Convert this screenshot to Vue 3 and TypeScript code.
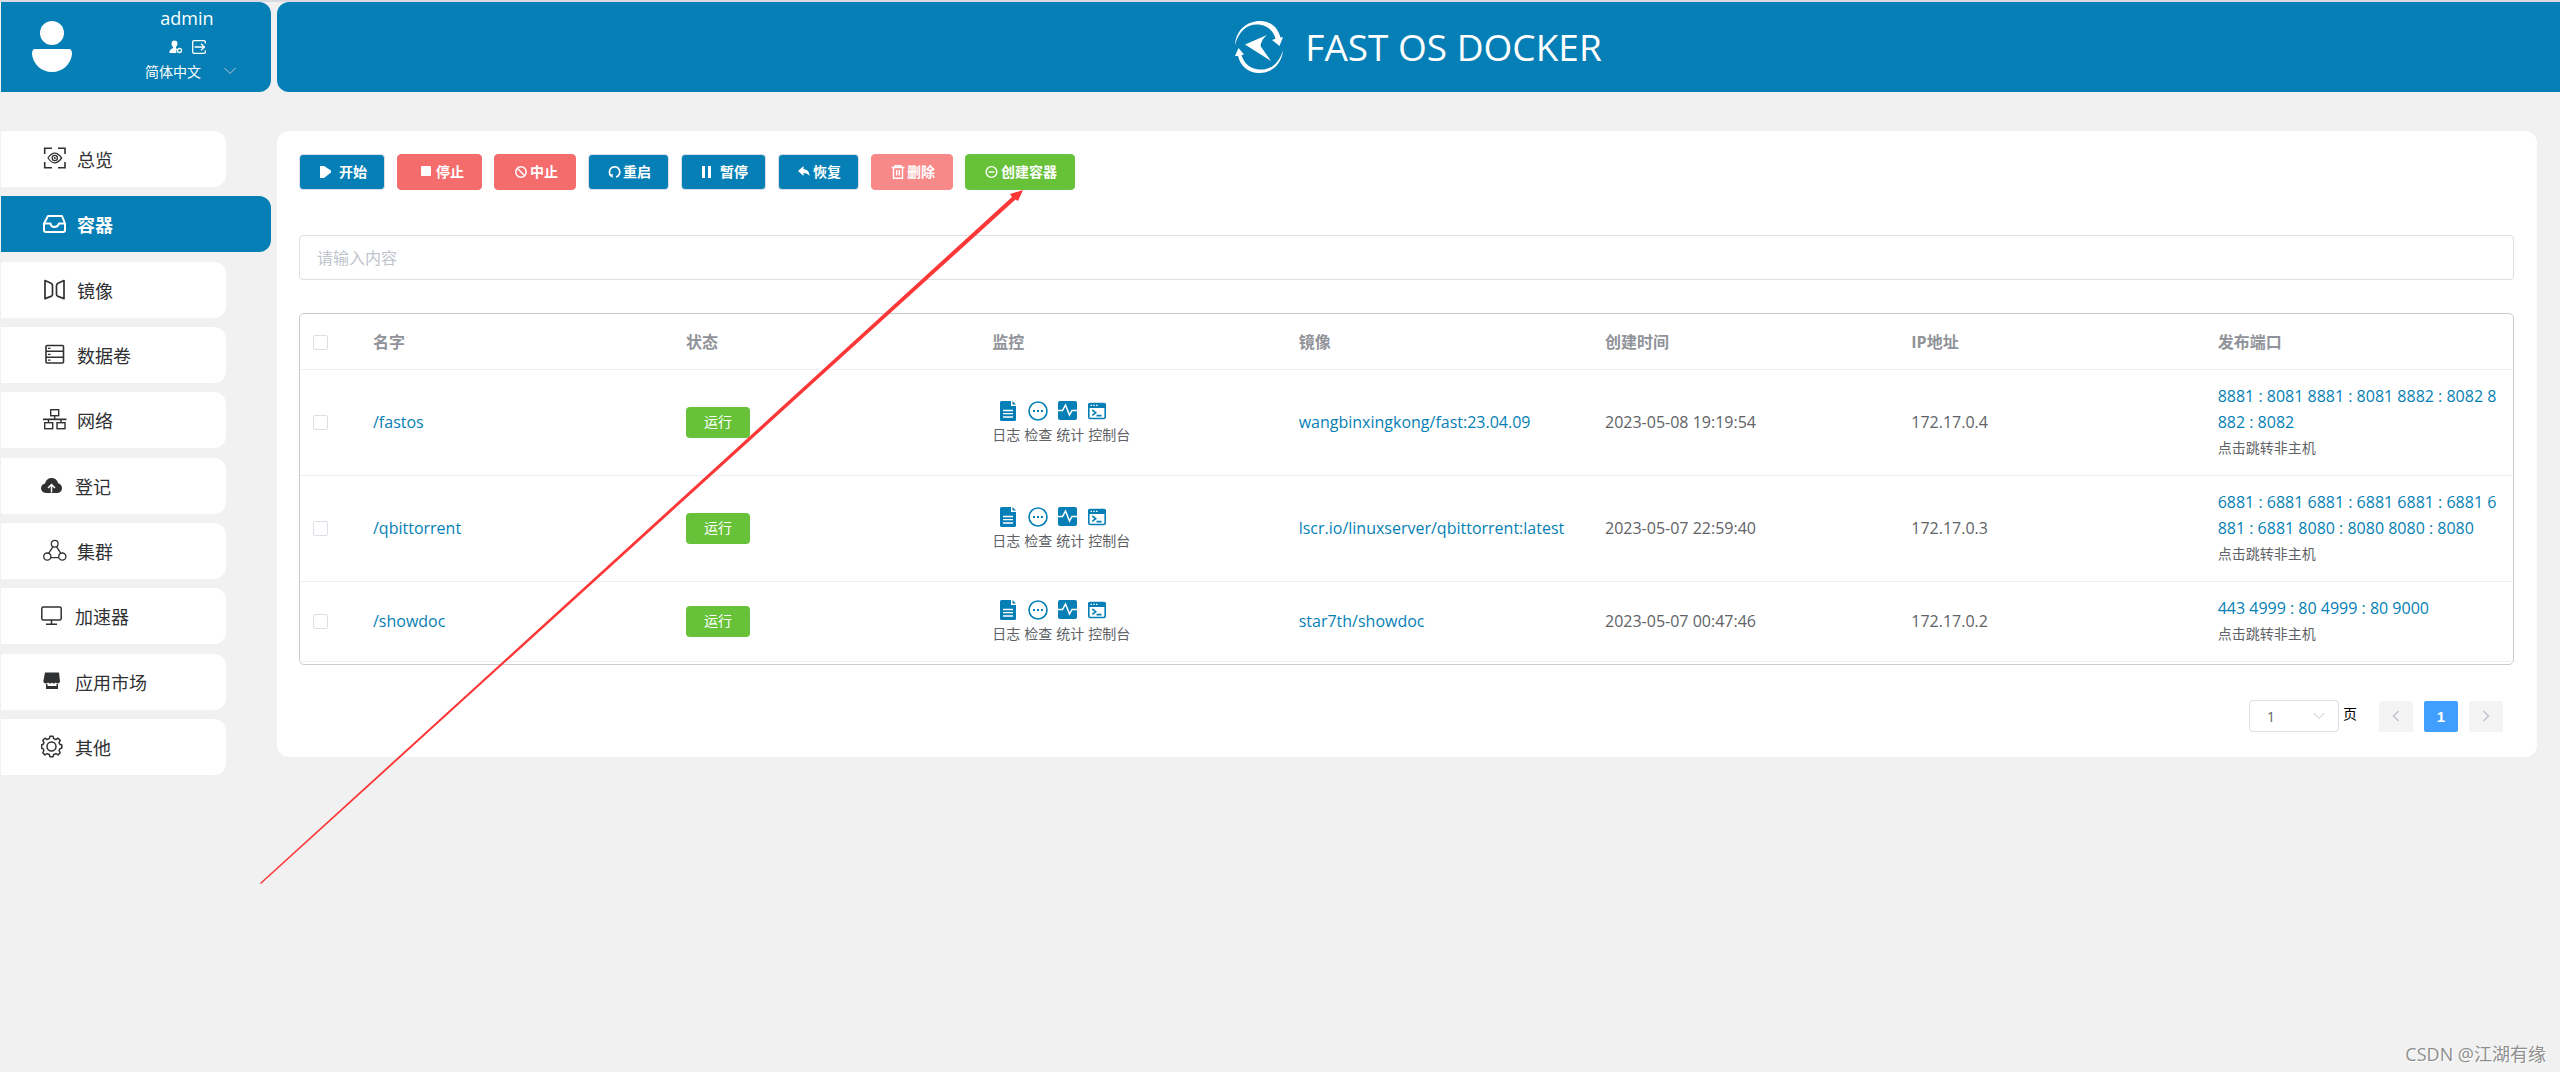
<script setup lang="ts">
import { ref } from 'vue'

interface NavItem { label: string; icon: string; inset?: boolean; active?: boolean }
interface Action { label: string; icon: string; iconWidth: number; kind: string }
interface Container { name: string; image: string; created: string; ip: string; ports: string }

const navItems: NavItem[] = [
  { label: '总览', icon: 'overview' },
  { label: '容器', icon: 'inbox', active: true },
  { label: '镜像', icon: 'mirror' },
  { label: '数据卷', icon: 'volume' },
  { label: '网络', icon: 'network' },
  { label: '登记', icon: 'cloud', inset: true },
  { label: '集群', icon: 'cluster' },
  { label: '加速器', icon: 'monitor', inset: true },
  { label: '应用市场', icon: 'store', inset: true },
  { label: '其他', icon: 'gear', inset: true },
]

const navIcons: Record<string, string> = {
  overview: '<g fill="none" stroke="currentColor" stroke-width="1.3"><path d="M1.7 7V1.2H9M15 1.2h7V7M22 15v5.8h-7M9 20.8H1.7V15" stroke-width="1.6"/><path d="M5 11q6.700-9.600 13.600 0q-6.900 9.600-13.600 0z"/><circle cx="11.800" cy="11" r="2.600"/></g><circle cx="11.800" cy="11" r="1" fill="currentColor"/>',
  inbox: '<g fill="none" stroke="currentColor" stroke-width="2" stroke-linejoin="round"><path d="M5 4h14l3 7.500V18q0 2-2 2H3q-2 0-2-2v-6.500z"/><path d="M1 11.500h6.500q.500 3.500 4 3.500t4.500-3.500H22"/></g>',
  mirror: '<g fill="none" stroke="currentColor" stroke-width="1.700" stroke-linejoin="round"><path d="M2 2.500l6 2.700q1.500 .800 1.500 2.300v9q0 1.300-1.500 1.900L2 20.600z"/><path d="M21 2.500l-6 2.700q-1.500 .800-1.500 2.300v9q0 1.300 1.500 1.900l6 2.200z"/></g>',
  volume: '<g fill="none" stroke="currentColor" stroke-width="1.600"><rect x="3" y="2.500" width="17.500" height="17.500" rx="1"/><path d="M3 8.300h17.500M3 14.200h17.500"/></g><path d="M5 4.800h2.500v1.300H5zM5 10.700h2.500V12H5zM5 16.500h2.500v1.300H5z" fill="currentColor"/>',
  network: '<g fill="none" stroke="currentColor" stroke-width="1.400"><rect x="7.700" y="1.700" width="8" height="6"/><path d="M11.700 8v3.500M5.500 11v4M18 11v4"/><rect x="1.700" y="14.700" width="8" height="6"/><rect x="14" y="14.700" width="8" height="6"/></g><path d="M0 10.500h23.500v1.700H0z" fill="currentColor"/>',
  cloud: '<path d="M5 19q-4.500-.500-5-4.500 0-4 4-5Q5.500 4 10.500 4t6.700 5.200q3.800 1.300 3.800 5-.300 4.300-4.500 4.800z" fill="currentColor"/><path d="M10.500 18.500v-7M7 14l3.500-3.500L14 14" fill="none" stroke="#fff" stroke-width="1.500"/>',
  cluster: '<g fill="none" stroke="currentColor" stroke-width="1.300"><circle cx="11.700" cy="4.700" r="3.400"/><circle cx="4.300" cy="17.600" r="3.600"/><circle cx="19.300" cy="17.600" r="3.600"/><path d="M10 7.700l-4.200 6.500M13.500 7.700l4.200 6.500M8 18.700h7.700"/></g>',
  monitor: '<g fill="none" stroke="currentColor" stroke-width="1.500"><rect x=".800" y="3" width="19.400" height="13" rx="1.500"/><path d="M10.500 16v4M5 20.300h11"/></g>',
  store: '<path d="M4 2.500h14l1 9q-.300 2-2.300 2-1.200 0-2-1-.700 1-1.900 1t-1.900-1q-.700 1-1.900 1t-1.900-1q-.700 1-2.300 1-2.200 0-2.500-2zM5 14h1.500v2h9v-2H17v5H5z" fill="currentColor"/>',
  gear: '<g fill="none" stroke="currentColor" stroke-width="1.500" stroke-linejoin="round"><path d="M8.300 3.600l.700-2.300h3l.700 2.300 2.200.900 2.200-1.300 2.100 2.100-1.100 2.300.700 1.600 2 .800v3l-2 .900-.700 1.600 1.100 2.300-2.100 2.100-2.200-1.300-2.200.900-.700 2.200H9l-.700-2.200-2.200-.900-2.200 1.300-2.100-2.100 1.100-2.300-.700-1.600-1.700-.900v-3l1.700-.800.700-1.600-1.100-2.300 2.100-2.100 2.200 1.300z"/><circle cx="10.500" cy="11.500" r="4.500"/></g>',
}

const actions: Action[] = [
  { label: '开始', icon: 'play', iconWidth: 20, kind: 'primary' },
  { label: '停止', icon: 'stop', iconWidth: 19, kind: 'danger' },
  { label: '中止', icon: 'ban', iconWidth: 16, kind: 'danger' },
  { label: '重启', icon: 'restart', iconWidth: 15, kind: 'primary' },
  { label: '暂停', icon: 'pause', iconWidth: 19, kind: 'primary' },
  { label: '恢复', icon: 'reply', iconWidth: 15, kind: 'primary' },
  { label: '删除', icon: 'trash', iconWidth: 16, kind: 'danger faded' },
  { label: '创建容器', icon: 'create', iconWidth: 16, kind: 'success' },
]

const actionIcons: Record<string, string> = {
  play: '<path d="M1 1h4l7 4.500v2L5 13H1z" fill="currentColor"/>',
  stop: '<rect x="4" y="1" width="10" height="10" rx="1" fill="currentColor"/>',
  ban: '<g fill="none" stroke="currentColor" stroke-width="1.500"><circle cx="7" cy="7" r="5.200"/><path d="M3.300 3.300l7.400 7.400"/></g>',
  restart: '<path d="M3.300 11A5.200 5.200 0 1 1 8 12" fill="none" stroke="currentColor" stroke-width="1.700"/><path d="M.500 9.200h4.300v3.800z" fill="currentColor"/>',
  pause: '<path d="M1 1h3v12H1zM7 1h3v12H7z" fill="currentColor"/>',
  reply: '<path d="M0 6l5.500-5v3q6 .500 6 7-2-3-6-3v3z" fill="currentColor"/>',
  trash: '<g fill="none" stroke="currentColor" stroke-width="1.500"><path d="M.500 2.500h13M4 2V.800h6V2M2.500 2.500v10.700h9V2.500M5.700 5v5.500M8.300 5v5.500"/></g>',
  create: '<g fill="none" stroke="currentColor" stroke-width="1.400"><circle cx="6.500" cy="7" r="5.400"/><path d="M3.500 7h6"/></g>',
}

const monitors = [
  { label: '日志', svg: '<path d="M2 1.500Q2 0 3.500 0H13v5h5v13.500q0 1.500-1.500 1.500h-13Q2 20 2 18.500z" fill="#057fb5"/><path d="M14.500 0L18 3.500h-3.500z" fill="#057fb5"/><path d="M5 9.500h10M5 12.700h10M5 16h10" stroke="#fff" stroke-width="1.300"/>' },
  { label: '检查', svg: '<circle cx="10" cy="10" r="9" fill="none" stroke="#057fb5" stroke-width="1.600"/><path d="M5 9h2v2H5zM9 9h2v2H9zM13 9h2v2h-2z" fill="#057fb5"/>' },
  { label: '统计', svg: '<rect width="19" height="19" rx="2" fill="#057fb5"/><path d="M0 9.500h4.500L7.500 4l4 10 2.500-4.500h5" fill="none" stroke="#fff" stroke-width="1.500"/>' },
  { label: '控制台', svg: '<rect x=".800" y="2.500" width="16.400" height="15" rx="1.500" fill="none" stroke="#057fb5" stroke-width="1.600"/><path d="M0 4q0-2 2-2h14q2 0 2 2v3H0z" fill="#057fb5"/><path d="M2.500 4.300h1.500M5.200 4.300h1.500M8 4.300h1.500" stroke="#fff" stroke-width="1.200"/><path d="M4.300 9l3.400 2.700-3.400 2.700M8.500 14.600h5" fill="none" stroke="#057fb5" stroke-width="1.600"/>' },
]

const containers: Container[] = [
  { name: '/fastos', image: 'wangbinxingkong/fast:23.04.09', created: '2023-05-08 19:19:54', ip: '172.17.0.4', ports: '8881 : 8081 8881 : 8081 8882 : 8082 8882 : 8082' },
  { name: '/qbittorrent', image: 'lscr.io/linuxserver/qbittorrent:latest', created: '2023-05-07 22:59:40', ip: '172.17.0.3', ports: '6881 : 6881 6881 : 6881 6881 : 6881 6881 : 6881 8080 : 8080 8080 : 8080' },
  { name: '/showdoc', image: 'star7th/showdoc', created: '2023-05-07 00:47:46', ip: '172.17.0.2', ports: '443 4999 : 80 4999 : 80 9000' },
]

const keyword = ref('')
const language = ref('zh')
const page = ref('1')
</script>

<template>
  <div class="page">
    <header class="top">
      <section class="user">
        <svg class="avatar" width="40" height="52" viewBox="0 0 40 52" aria-hidden="true">
          <circle cx="20" cy="12" r="12" fill="#fff" />
          <path d="M3 28h34q3 0 3 5C39 43 31 51 20 51S1 43 0 33q0-5 3-5z" fill="#fff" />
        </svg>
        <div class="account">
          <span class="user-name">admin</span>
          <div class="user-tools">
            <button type="button" aria-label="账户">
              <svg width="14" height="14" viewBox="0 0 14 14">
                <path d="M5.500.500q3 0 3 3.300 0 2-1.500 3.200v1.200l1.200.800Q6.500 10.500 7.500 13H.500q-.500-3.500 3.500-5V7Q2.500 6 2.500 3.800 2.500.500 5.500.500z" fill="#fff" />
                <circle cx="10.500" cy="10.500" r="2" fill="none" stroke="#fff" stroke-width="1.300" />
              </svg>
            </button>
            <button type="button" aria-label="退出">
              <svg width="14" height="14" viewBox="0 0 14 14" fill="none" stroke="#fff" stroke-width="1.300">
                <path d="M13.300 3.500V2Q13.300.700 12 .700H2Q.700.700.700 2v10q0 1.300 1.300 1.300h10q1.300 0 1.300-1.300v-1.500M2.500 7h10M9 3.800L12.500 7 9 10.200" />
              </svg>
            </button>
          </div>
          <div class="language">
            <select v-model="language" aria-label="语言">
              <option value="zh">简体中文</option>
            </select>
            <svg class="caret" width="12" height="8" viewBox="0 0 12 8" fill="none" stroke="#c0c4cc">
              <path d="M.500 1L6 6.500 11.500 1" />
            </svg>
          </div>
        </div>
      </section>
      <section class="brand">
        <svg width="48" height="52" viewBox="0 0 48 52" aria-hidden="true">
          <path d="M0 24C1 9 12 0 25 0c11 0 18 7 20.500 16.500L48 16l-3.500 9L37 19l3.500-1.200C38 9 32 4.500 24 3.500 13 2.500 4 9 0 24z" fill="#fff" />
          <path d="M48 29c-1 14-11 23-24 23C13 52 5.500 45 3 35H0l3.500-8L9 33.500l-2.500.800C9 43 16 48 24 48.500 35 49.500 44 43 48 29z" fill="#fff" />
          <path d="M10 23.500L32 14q-6 5-6.500 11L36 40z" fill="#fff" />
        </svg>
        <h1>FAST OS DOCKER</h1>
      </section>
    </header>

    <div class="body">
      <nav class="sidebar">
        <a v-for="item in navItems" :key="item.label" href="#" class="nav-item" :class="{ inset: item.inset, active: item.active }">
          <svg width="24" height="24" viewBox="0 0 24 24" v-html="navIcons[item.icon]"></svg>
          <span>{{ item.label }}</span>
        </a>
      </nav>

      <main class="card">
        <div class="actions">
          <button v-for="a in actions" :key="a.label" type="button" class="btn" :class="a.kind">
            <svg :width="a.iconWidth" height="14" :viewBox="`0 0 ${a.iconWidth} 14`" v-html="actionIcons[a.icon]"></svg>
            <span>{{ a.label }}</span>
          </button>
        </div>

        <input v-model="keyword" class="search" type="text" placeholder="请输入内容" aria-label="搜索" />

        <div class="table-box">
          <table>
            <colgroup>
              <col class="col-check" />
              <col class="col-name" />
              <col v-for="n in 6" :key="n" />
            </colgroup>
            <thead>
              <tr>
                <th><input type="checkbox" aria-label="全选" /></th>
                <th>名字</th>
                <th>状态</th>
                <th>监控</th>
                <th>镜像</th>
                <th>创建时间</th>
                <th>IP地址</th>
                <th>发布端口</th>
              </tr>
            </thead>
            <tbody>
              <tr v-for="c in containers" :key="c.name">
                <td><input type="checkbox" :aria-label="c.name" /></td>
                <td><a href="#">{{ c.name }}</a></td>
                <td><span class="tag">运行</span></td>
                <td>
                  <div class="monitor-icons">
                    <svg v-for="m in monitors" :key="m.label" width="20" height="20" viewBox="0 0 20 20" v-html="m.svg"></svg>
                  </div>
                  <div class="monitor-labels">
                    <span v-for="m in monitors" :key="m.label">{{ m.label }}</span>
                  </div>
                </td>
                <td><a href="#">{{ c.image }}</a></td>
                <td>{{ c.created }}</td>
                <td>{{ c.ip }}</td>
                <td class="ports">
                  <a href="#">{{ c.ports }}</a>
                  <div class="hint">点击跳转非主机</div>
                </td>
              </tr>
            </tbody>
          </table>
        </div>

        <div class="pager">
          <label class="page-size">
            <span class="select-wrap">
              <select v-model="page">
                <option value="1">1</option>
              </select>
              <svg class="caret" width="12" height="8" viewBox="0 0 12 8" fill="none" stroke="#c0c4cc">
                <path d="M.500 1L6 6.500 11.500 1" />
              </svg>
            </span>
            <span class="unit">页</span>
          </label>
          <button type="button" class="page-btn" disabled aria-label="上一页">
            <svg width="8" height="12" viewBox="0 0 8 12" fill="none" stroke="#c0c4cc" stroke-width="1.500"><path d="M6.500 1L1.500 6l5 5" /></svg>
          </button>
          <button type="button" class="page-btn current">1</button>
          <button type="button" class="page-btn" disabled aria-label="下一页">
            <svg width="8" height="12" viewBox="0 0 8 12" fill="none" stroke="#c0c4cc" stroke-width="1.500"><path d="M1.500 1l5 5-5 5" /></svg>
          </button>
        </div>
      </main>
    </div>

    <svg class="arrow" width="764" height="695" viewBox="0 0 764 695" aria-hidden="true">
      <path d="M0 694L752 8l-2-3L763 1l-5 11-2.500-1.500L1 695z" fill="#fc3737" />
    </svg>
    <div class="watermark">CSDN @江湖有缘</div>
  </div>
</template>

<style>
body {
  margin: 0;
  background: #f1f1f1;
}
</style>

<style scoped>
.page {
  position: relative;
  box-sizing: border-box;
  min-height: 100vh;
  padding-left: 1px;
  border-top: 2px solid #d9dbe0;
  background: #f1f1f1;
  color: #606266;
  font-family: "Open Sans", "Noto Sans", "Noto Sans CJK SC", sans-serif;
  font-size: 16px;
  line-height: 26px;
}
button,
input,
select {
  margin: 0;
  font-family: inherit;
}
button {
  padding: 0;
  border: 0;
  background: none;
  cursor: pointer;
}
svg {
  display: block;
  flex: none;
}
a {
  color: #057fb5;
  text-decoration: none;
}

.top {
  display: flex;
  gap: 6px;
  height: 90px;
}
.user,
.brand {
  display: flex;
  background: #057fb5;
  color: #fff;
}
.user {
  box-sizing: border-box;
  width: 270px;
  padding: 2px 0 0 31px;
  border-radius: 0 12px 12px 0;
}
.avatar {
  margin-top: 17px;
}
.account {
  display: flex;
  flex-direction: column;
  align-items: center;
  width: 134px;
  margin-left: 48px;
}
.user-name {
  font-size: 18px;
  line-height: 28px;
}
.user-tools {
  display: flex;
  gap: 9px;
  height: 22px;
  padding-top: 4px;
}
.language {
  position: relative;
  align-self: stretch;
  margin-left: 25px;
  height: 24px;
}
.language select {
  width: 100%;
  height: 24px;
  padding: 0;
  border: 0;
  background: none;
  appearance: none;
  color: #fff;
  font-size: 14px;
}
.language .caret {
  position: absolute;
  top: 9px;
  right: 18px;
  pointer-events: none;
}
.brand {
  flex: 1;
  align-items: center;
  justify-content: center;
  gap: 22px;
  border-radius: 12px 0 0 12px;
}
h1 {
  margin: 0;
  font-size: 37px;
  font-weight: 400;
  line-height: 48px;
}

.body {
  display: flex;
  align-items: flex-start;
  gap: 6px;
  padding: 39px 23px 39px 0;
}
.sidebar {
  display: flex;
  flex: none;
  flex-direction: column;
  justify-content: space-between;
  width: 270px;
  min-height: 644px;
}
.nav-item {
  display: flex;
  box-sizing: border-box;
  align-items: center;
  gap: 10px;
  width: 225px;
  height: 56px;
  padding-left: 42px;
  border-radius: 0 12px 12px 0;
  background: #fff;
  color: #303133;
  font-size: 18px;
}
.nav-item span {
  padding-top: 2px;
}
.nav-item.inset {
  padding-left: 40px;
}
.nav-item.active {
  width: 270px;
  background: #057fb5;
  color: #fff;
  font-weight: 700;
}

.card {
  flex: 1;
  min-width: 0;
  padding: 23px 23px 25px 22px;
  border-radius: 12px;
  background: #fff;
}
.actions {
  display: flex;
  flex-wrap: wrap;
  gap: 12px;
}
.btn {
  display: flex;
  box-sizing: border-box;
  align-items: center;
  height: 36px;
  padding: 0 17px 0 19px;
  border: 1px solid transparent;
  border-radius: 4px;
  color: #fff;
  font-size: 14px;
  font-weight: 700;
}
.btn span {
  padding-bottom: 2px;
}
.primary {
  border-color: #dcdfe6;
  background: #057fb5;
}
.danger {
  border-color: #f56c6c;
  background: #f56c6c;
}
.faded {
  border-color: #f78989;
  background: #f78989;
}
.success {
  border-color: #67c23a;
  background: #67c23a;
}

.search {
  display: block;
  box-sizing: border-box;
  width: 100%;
  height: 45px;
  margin: 45px 0 33px;
  padding: 0 17px;
  border: 1px solid #dcdfe6;
  border-radius: 4px;
  outline: 0;
  background: #fff;
  color: #606266;
  font-size: 16px;
}
.search::placeholder {
  color: #c0c4cc;
}

.table-box {
  padding: 0 1px 2px 0;
  border: 1px solid #ccc;
  border-radius: 5px;
}
table {
  width: 100%;
  table-layout: fixed;
  border-collapse: separate;
  border-spacing: 0;
}
.col-check {
  width: 61px;
}
.col-name {
  width: 313px;
}
th,
td {
  padding: 13px 12px 14px 12px;
  border-bottom: 1px solid #ebeef5;
  text-align: left;
  vertical-align: middle;
}
th {
  padding: 15px 12px 14px 12px;
  color: #909399;
  font-weight: 700;
}
th:first-child,
td:first-child {
  padding-left: 13px;
}
input[type="checkbox"] {
  display: block;
  box-sizing: border-box;
  width: 15px;
  height: 15px;
  border: 1px solid #dcdfe6;
  border-radius: 2px;
  background: #fff;
  appearance: none;
}
.tag {
  display: block;
  width: 64px;
  height: 31px;
  border-radius: 4px;
  background: #67c23a;
  color: #fff;
  font-size: 14px;
  line-height: 30px;
  text-align: center;
}
.monitor-icons {
  display: flex;
  box-sizing: border-box;
  align-items: center;
  gap: 10px;
  height: 26px;
  padding: 4px 0 0 6px;
}
.monitor-labels {
  display: flex;
  gap: 4px;
  font-size: 14px;
}
.ports a {
  display: block;
  word-break: break-all;
}
.hint {
  font-size: 14px;
}

.pager {
  display: flex;
  align-items: center;
  justify-content: flex-end;
  gap: 11px;
  height: 32px;
  margin-top: 35px;
  padding-right: 11px;
}
.page-size {
  display: flex;
  align-items: center;
  gap: 4px;
  margin-right: 11px;
  color: #000;
  font-size: 14px;
}
.unit {
  padding-bottom: 4px;
}
.select-wrap {
  position: relative;
}
.select-wrap select {
  display: block;
  box-sizing: border-box;
  width: 90px;
  height: 32px;
  padding: 0 17px;
  border: 1px solid #dcdfe6;
  border-radius: 4px;
  background: #fff;
  appearance: none;
  color: #606266;
  font-size: 14px;
}
.select-wrap .caret {
  position: absolute;
  top: 12px;
  right: 14px;
  pointer-events: none;
}
.page-btn {
  display: flex;
  align-items: center;
  justify-content: center;
  width: 34px;
  height: 31px;
  border-radius: 2px;
  background: #f4f4f5;
}
.current {
  background: #409eff;
  color: #fff;
  font-family: "Liberation Sans", sans-serif;
  font-size: 15px;
  font-weight: 700;
}

.arrow {
  position: absolute;
  top: 187px;
  left: 260px;
  pointer-events: none;
}
.watermark {
  position: absolute;
  right: 14px;
  bottom: 5px;
  color: #8f8f8f;
  font-size: 18px;
  text-shadow: 1px 1px 0 #fff;
}
</style>
